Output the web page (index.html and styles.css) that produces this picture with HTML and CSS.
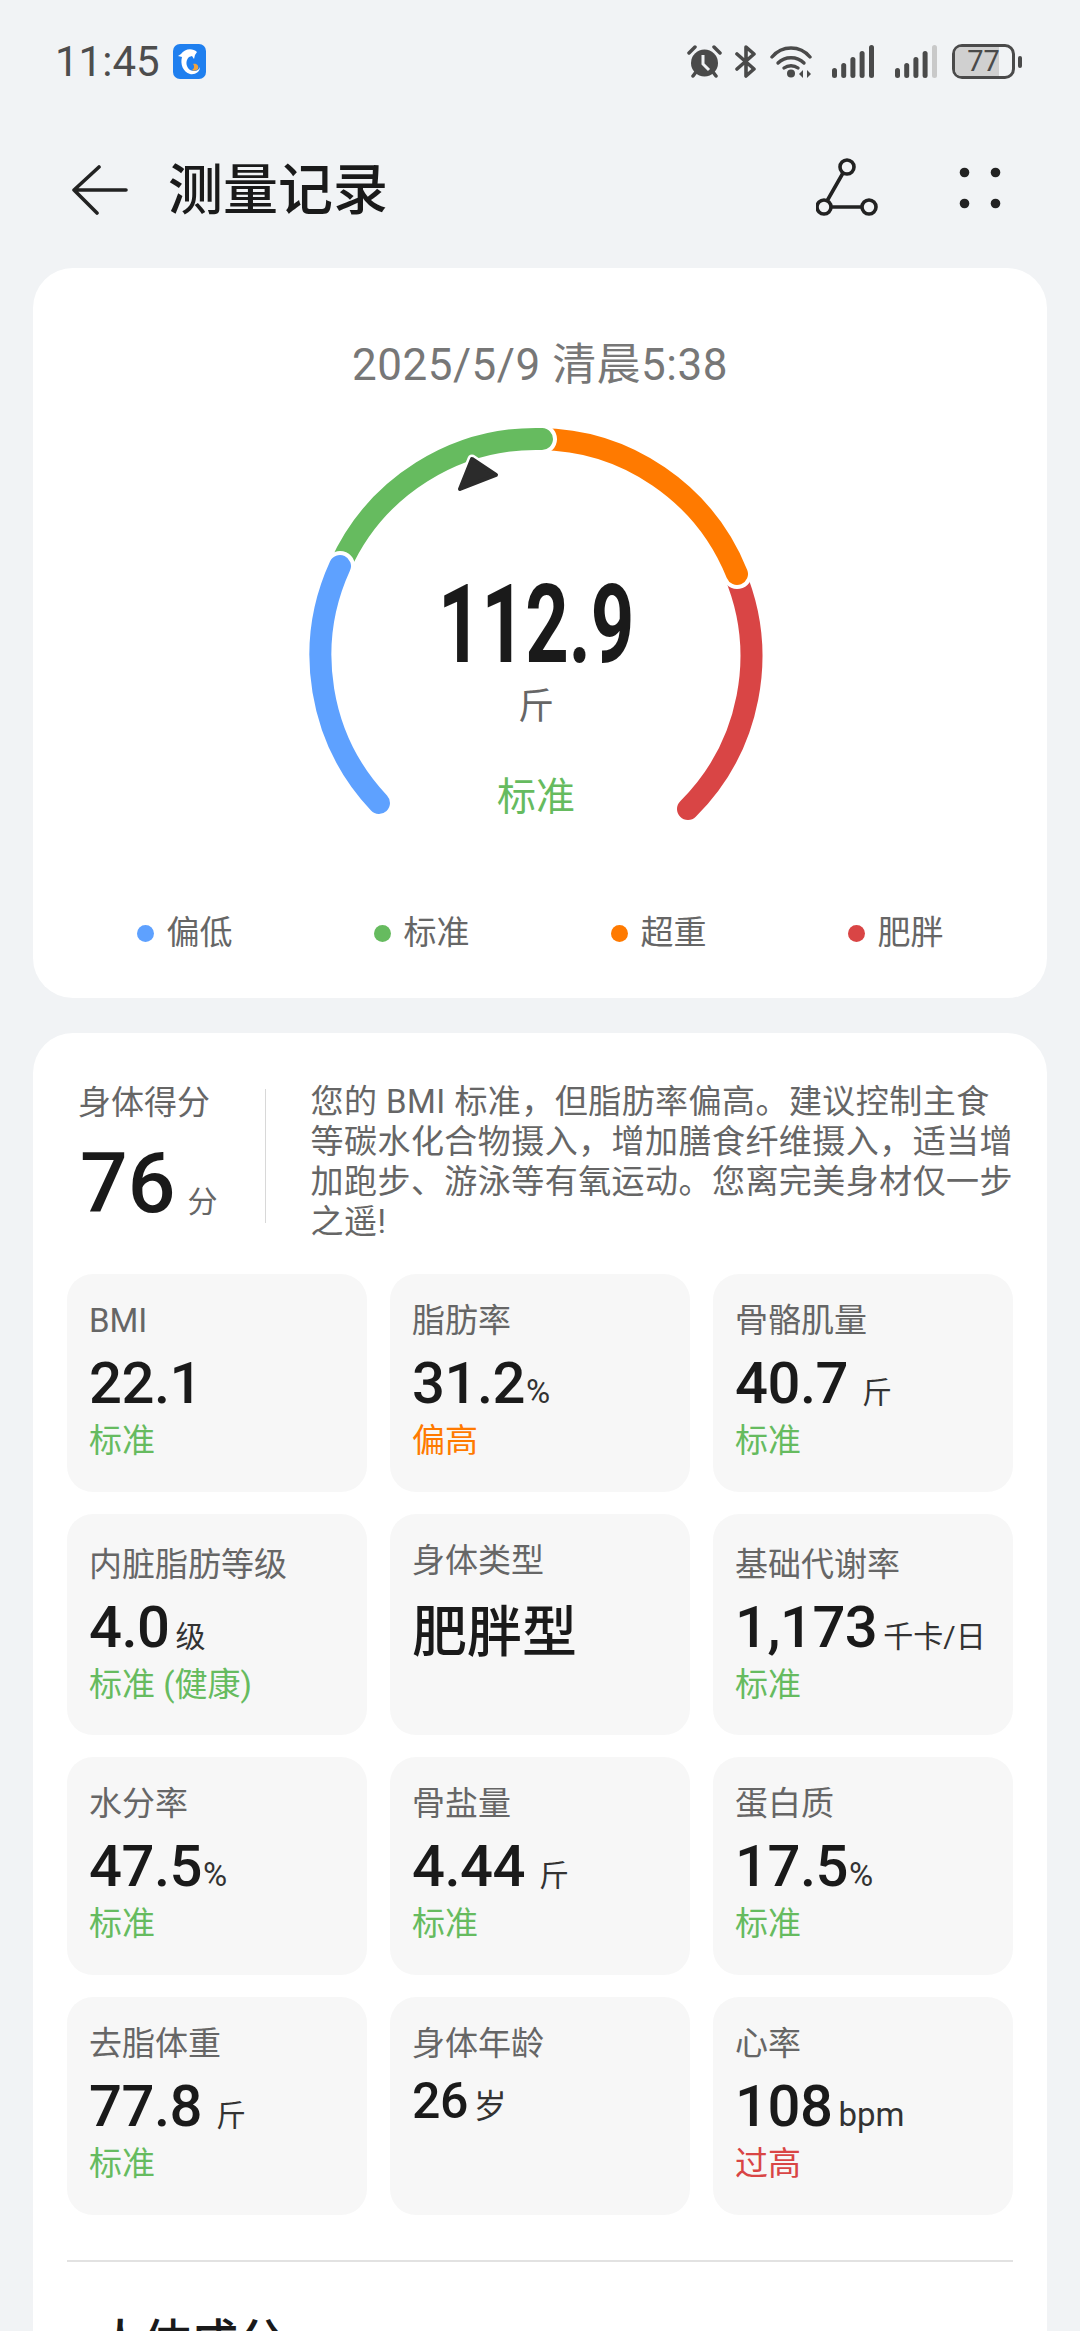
FILE: index.html
```html
<!DOCTYPE html>
<html lang="zh-CN">
<head>
    <meta charset="UTF-8">
    <meta name="viewport" content="width=device-width, initial-scale=1.0">
    <title>测量记录</title>
    <link rel="stylesheet" href="styles.css">
</head>
<body>
    <div class="status-bar">
        <span class="clock">11:45</span>
        <svg class="app-badge" width="33" height="35" viewBox="0 0 33 35">
            <rect width="33" height="35" rx="7" fill="#1f7fef"/>
            <path d="M24 8C20 4 12 4 8 10L5 12l4 1c-2 7 1 15 8 17 5 1 10-2 10-7-1 4-6 5-10 3-4-3-5-9-1-13l3-1 2 3 1-4z" fill="#fff"/>
            <path d="M20 20c4-1 6 2 5 5-2 2-5 2-6 1 2-1 3-4 1-6z" fill="#f0a33c"/>
        </svg>
        <div class="status-icons">
            <svg class="gap-13" width="35" height="33" viewBox="0 0 35 33" fill="#4a4a4a">
                <circle cx="17.5" cy="18" r="13.5"/>
                <path d="M2 8l6-6M33 8l-6-6M6 31l3-4M29 31l-3-4" stroke="#4a4a4a" stroke-width="3.5" stroke-linecap="round"/>
                <path d="M16 10v9l6 6" fill="none" stroke="#f1f3f5" stroke-width="3"/>
            </svg>
            <svg class="gap-14" width="21" height="33" viewBox="0 0 21 33" fill="none" stroke="#4a4a4a" stroke-width="3.6" stroke-linejoin="round" stroke-linecap="round">
                <path d="M2 9l17 15-8 7V2l8 7L2 24"/>
            </svg>
            <svg class="gap-20" width="42" height="33" viewBox="0 0 42 33" fill="none" stroke="#4a4a4a" stroke-width="3.4" stroke-linecap="round">
                <path d="M2 12C12 0 30 0 40 12"/>
                <path d="M8 18c7-7 19-7 26 0"/>
                <path d="M14 23c4-3 10-3 14 0"/>
                <circle cx="21" cy="28.5" r="4" fill="#4a4a4a" stroke="none"/>
                <path d="M33 25l-4 4 4 4zM37 25l4 4-4 4z" fill="#4a4a4a" stroke="none"/>
            </svg>
            <svg class="gap-21" width="42" height="33" viewBox="0 0 42 33" fill="#4a4a4a">
                <rect x="0" y="23" width="5" height="10" rx="2.5"/>
                <rect x="9.2" y="18" width="5" height="15" rx="2.5"/>
                <rect x="18.4" y="12" width="5" height="21" rx="2.5"/>
                <rect x="27.6" y="6" width="5" height="27" rx="2.5"/>
                <rect x="37" y="0" width="5" height="33" rx="2.5"/>
            </svg>
            <svg class="gap-15" width="42" height="33" viewBox="0 0 42 33" fill="#4a4a4a">
                <rect x="0" y="23" width="5" height="10" rx="2.5"/>
                <rect x="9.2" y="18" width="5" height="15" rx="2.5"/>
                <rect x="18.4" y="12" width="5" height="21" rx="2.5"/>
                <rect x="27.6" y="6" width="5" height="27" rx="2.5"/>
                <rect x="37" y="0" width="5" height="33" rx="2.5" fill="#c9c9c9"/>
            </svg>
            <div class="battery">
                <div class="battery-body">
                    <div class="battery-fill"></div>
                    <span class="battery-num">77</span>
                </div>
                <div class="battery-tip"></div>
            </div>
        </div>
    </div>

    <div class="app-bar">
        <svg class="back" width="56" height="50" viewBox="0 0 56 50" fill="none" stroke="#222" stroke-width="3.6" stroke-linecap="round" stroke-linejoin="round">
            <path d="M27 2L2 25l23 23M2 25h52"/>
        </svg>
        <h1 class="page-title">测量记录</h1>
        <svg class="share" width="62" height="62" viewBox="0 0 62 62" fill="none" stroke="#222" stroke-width="3.6">
            <circle cx="31" cy="10" r="7"/>
            <circle cx="8" cy="50" r="7"/>
            <circle cx="53" cy="50" r="7"/>
            <path d="M27 16L11 44M15 50h31"/>
        </svg>
        <svg class="more" width="42" height="42" viewBox="0 0 42 42" fill="#222">
            <circle cx="5.5" cy="5.5" r="4.8"/>
            <circle cx="36.5" cy="5.5" r="4.8"/>
            <circle cx="5.5" cy="36.5" r="4.8"/>
            <circle cx="36.5" cy="36.5" r="4.8"/>
        </svg>
    </div>

    <section class="card weight-card">
        <div class="measure-date">2025/5/9 清晨5:38</div>
        <div class="gauge">
            <svg width="480" height="420" viewBox="0 0 480 420" fill="none" stroke-width="22" stroke-linecap="round">
                <!-- centre 240,235 r215 -->
                <path d="M438 153A215 215 0 0 1 392 390" stroke="#d94545"/>
                <path d="M243 20A215 215 0 0 1 441 155" stroke="#fff" stroke-width="30"/>
                <path d="M243 20A215 215 0 0 1 441 155" stroke="#ff7a00"/>
                <path d="M44 147A215 215 0 0 1 246 20" stroke="#fff" stroke-width="30"/>
                <path d="M44 147A215 215 0 0 1 246 20" stroke="#66bb5f"/>
                <path d="M44 147A215 215 0 0 0 83 384" stroke="#fff" stroke-width="30" stroke-dasharray="1 900"/>
                <path d="M44 147A215 215 0 0 0 83 384" stroke="#5ea1ff"/>
                <path d="M176 40L200 56 164 70z" fill="#2b2b2b" stroke="#fff" stroke-width="9" stroke-linejoin="round"/>
                <path d="M176 40L200 56 164 70z" fill="#2b2b2b" stroke="#2b2b2b" stroke-width="4" stroke-linejoin="round"/>
            </svg>
            <div class="gauge-text">
                <div class="gauge-value">112.9</div>
                <div class="gauge-unit">斤</div>
                <div class="gauge-status">标准</div>
            </div>
        </div>
        <div class="legend">
            <div class="legend-item"><i class="dot dot-blue"></i>偏低</div>
            <div class="legend-item"><i class="dot dot-green"></i>标准</div>
            <div class="legend-item"><i class="dot dot-orange"></i>超重</div>
            <div class="legend-item"><i class="dot dot-red"></i>肥胖</div>
        </div>
    </section>

    <section class="card detail-card">
        <div class="summary">
            <div class="score">
                <div class="score-label">身体得分</div>
                <div class="score-row"><span class="score-num">76</span><span class="score-unit">分</span></div>
            </div>
            <p class="summary-text">您的 BMI 标准，但脂肪率偏高。建议控制主食<br>等碳水化合物摄入，增加膳食纤维摄入，适当增<br>加跑步、游泳等有氧运动。您离完美身材仅一步<br>之遥!</p>
        </div>

        <div class="tiles">
            <div class="tile">
                <div class="tile-label">BMI</div>
                <div class="tile-value">22.1</div>
                <div class="tile-status ok">标准</div>
            </div>
            <div class="tile">
                <div class="tile-label">脂肪率</div>
                <div class="tile-value">31.2<span class="unit pct">%</span></div>
                <div class="tile-status warn">偏高</div>
            </div>
            <div class="tile">
                <div class="tile-label">骨骼肌量</div>
                <div class="tile-value">40.7<span class="unit wide">斤</span></div>
                <div class="tile-status ok">标准</div>
            </div>
            <div class="tile tall">
                <div class="tile-label">内脏脂肪等级</div>
                <div class="tile-value">4.0<span class="unit">级</span></div>
                <div class="tile-status ok">标准 (健康)</div>
            </div>
            <div class="tile">
                <div class="tile-label">身体类型</div>
                <div class="tile-type">肥胖型</div>
            </div>
            <div class="tile tall">
                <div class="tile-label">基础代谢率</div>
                <div class="tile-value">1,173<span class="unit">千卡/日</span></div>
                <div class="tile-status ok">标准</div>
            </div>
            <div class="tile">
                <div class="tile-label">水分率</div>
                <div class="tile-value">47.5<span class="unit pct">%</span></div>
                <div class="tile-status ok">标准</div>
            </div>
            <div class="tile">
                <div class="tile-label">骨盐量</div>
                <div class="tile-value">4.44<span class="unit wide">斤</span></div>
                <div class="tile-status ok">标准</div>
            </div>
            <div class="tile">
                <div class="tile-label">蛋白质</div>
                <div class="tile-value">17.5<span class="unit pct">%</span></div>
                <div class="tile-status ok">标准</div>
            </div>
            <div class="tile">
                <div class="tile-label">去脂体重</div>
                <div class="tile-value">77.8<span class="unit wide">斤</span></div>
                <div class="tile-status ok">标准</div>
            </div>
            <div class="tile">
                <div class="tile-label">身体年龄</div>
                <div class="tile-value small">26<span class="unit age">岁</span></div>
            </div>
            <div class="tile">
                <div class="tile-label">心率</div>
                <div class="tile-value">108<span class="unit bpm">bpm</span></div>
                <div class="tile-status bad">过高</div>
            </div>
        </div>

        <div class="divider"></div>
        <h2 class="section-title">人体成分</h2>
    </section>
</body>
</html>
```

FILE: styles.css
```css
* {
    box-sizing: border-box;
}

html, body {
    height: 2331px;
    overflow: hidden;
}

body {
    margin: 0;
    background-color: #f1f3f5;
    font-family: Roboto, "Noto Sans CJK SC", sans-serif;
    color: #1a1a1a;
}

/* status bar */
.status-bar {
    height: 96px;
    padding: 44px 58px 0 55px;
    display: flex;
    align-items: flex-start;
}

.clock {
    font-size: 42px;
    line-height: 35px;
    color: #4d4d4d;
}

.app-badge {
    margin-left: 13px;
}

.status-icons {
    margin-left: auto;
    display: flex;
    align-items: flex-start;
    padding-top: 1px;
}

.gap-13 { margin-right: 13px; }
.gap-14 { margin-right: 14px; }
.gap-15 { margin-right: 15px; }
.gap-20 { margin-right: 20px; }
.gap-21 { margin-right: 21px; }

.battery {
    display: flex;
    align-items: center;
    margin-top: -1px;
}

.battery-body {
    position: relative;
    width: 63px;
    height: 35px;
    border: 3px solid #4a4a4a;
    border-radius: 10px;
    display: flex;
    align-items: center;
    justify-content: center;
}

.battery-fill {
    position: absolute;
    left: 0;
    top: 0;
    bottom: 0;
    width: 77%;
    border-radius: 6px 0 0 6px;
    background: #d0d0d0;
}

.battery-num {
    position: relative;
    font-size: 29px;
    line-height: 29px;
    color: #4a4a4a;
}

.battery-tip {
    width: 4px;
    height: 12px;
    margin-left: 3px;
    border-radius: 2px;
    background: #4a4a4a;
}

/* title bar */
.app-bar {
    height: 172px;
    padding-left: 72px;
    padding-right: 79px;
    display: flex;
    align-items: flex-start;
}

.back {
    margin-top: 69px;
}

.page-title {
    margin: 61px 0 0 40px;
    font-size: 55px;
    line-height: 66px;
    font-weight: 500;
}

.share {
    margin: 61px 0 0 auto;
}

.more {
    margin: 71px 0 0 81px;
}

/* cards */
.card {
    margin: 0 33px;
    background: #fff;
    border-radius: 40px;
}

.weight-card {
    height: 730px;
    padding: 72px 33px 0;
    display: flex;
    flex-direction: column;
}

.measure-date {
    text-align: center;
    font-size: 44px;
    line-height: 50px;
    letter-spacing: 0.5px;
    color: #777;
}

.gauge {
    position: relative;
    width: 480px;
    height: 420px;
    margin-top: 29px;
    margin-left: 230px;
}

.gauge-text {
    position: absolute;
    left: 0;
    right: 0;
    top: 146px;
    display: flex;
    flex-direction: column;
    align-items: center;
}

.gauge-value {
    font-size: 110px;
    line-height: 120px;
    font-weight: 700;
    transform: scaleX(0.69);
}

.gauge-unit {
    font-size: 36px;
    line-height: 44px;
    color: #666;
}

.gauge-status {
    margin-top: 44px;
    font-size: 39px;
    line-height: 48px;
    color: #66bb5f;
}

.legend {
    margin-top: 72px;
    display: grid;
    grid-template-columns: repeat(4, 1fr);
}

.legend-item {
    display: flex;
    align-items: center;
    justify-content: center;
    gap: 13px;
    font-size: 33px;
    line-height: 44px;
    color: #666;
}

.dot {
    width: 17px;
    height: 17px;
    border-radius: 50%;
}

.dot-blue { background: #5ea1ff; }
.dot-green { background: #66bb5f; }
.dot-orange { background: #ff7a00; }
.dot-red { background: #d94545; }

.detail-card {
    margin-top: 35px;
    padding: 49px 34px 0;
    border-radius: 40px 40px 0 0;
}

/* score and advice */
.summary {
    display: flex;
    align-items: flex-start;
    height: 192px;
}

.score {
    width: 196px;
    height: 134px;
    margin: 7px 0 0 11px;
    border-right: 1px solid #d8d8d8;
}

.score-label {
    margin-top: -6px;
    font-size: 33px;
    line-height: 40px;
    color: #666;
}

.score-row {
    display: flex;
    align-items: baseline;
    margin-top: 19px;
    padding-left: 2px;
}

.score-num {
    font-size: 84px;
    line-height: 84px;
    font-weight: 500;
}

.score-unit {
    margin-left: 12px;
    font-size: 30px;
    color: #666;
}

.summary-text {
    margin: 0 0 0 45px;
    font-size: 33px;
    line-height: 40px;
    letter-spacing: 0.45px;
    color: #666;
    white-space: nowrap;
}

/* measurement tiles */
.tiles {
    display: grid;
    grid-template-columns: repeat(3, 300px);
    column-gap: 23px;
    grid-template-rows: 218px 221px 218px 218px;
    row-gap: 22px;
}

.tile {
    padding: 25px 20px 0 22px;
    background: #f7f7f7;
    border-radius: 26px;
}

.tile.tall {
    padding-top: 29px;
}

.tile-label {
    font-size: 33px;
    line-height: 44px;
    color: #666;
}

.tile-value {
    display: flex;
    align-items: baseline;
    height: 76px;
    padding-top: 2px;
    font-size: 58px;
    line-height: 76px;
    font-weight: 500;
    letter-spacing: -0.5px;
    white-space: nowrap;
}

.tile-value.small {
    font-size: 50px;
    line-height: 66px;
}

.unit {
    margin-left: 6px;
    font-size: 30px;
    font-weight: 400;
    letter-spacing: 0;
    color: #333;
}

.unit.wide {
    margin-left: 14px;
}

.unit.pct {
    margin-left: 1px;
    font-size: 33px;
}

.unit.age,
.unit.bpm {
    font-size: 33px;
}

.tile-type {
    margin-top: 17px;
    font-size: 55px;
    line-height: 64px;
    font-weight: 500;
}

.tile-status {
    font-size: 33px;
    line-height: 44px;
}

.ok { color: #66bb5f; }
.warn { color: #ff7a00; }
.bad { color: #d94545; }

.divider {
    height: 2px;
    margin-top: 45px;
    background: #e2e2e2;
}

.section-title {
    margin: 50px 0 0 30px;
    font-size: 47px;
    line-height: 60px;
    font-weight: 500;
}
```
